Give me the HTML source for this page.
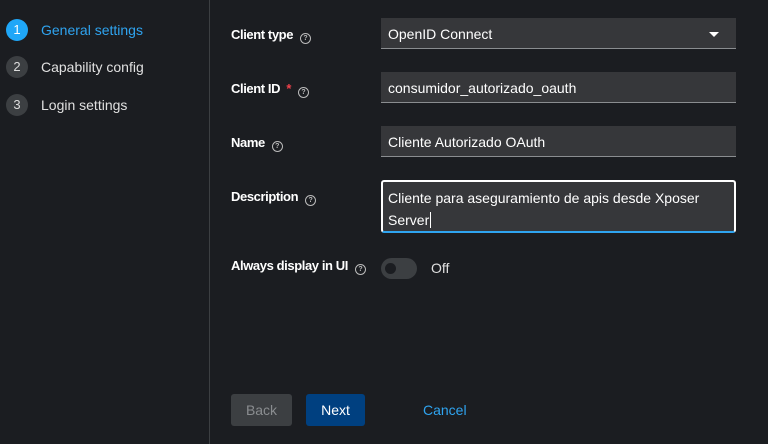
<html><head><style>
body{margin:0;width:768px;height:444px;background:#1b1d21;font-family:"Liberation Sans",sans-serif;position:relative;overflow:hidden;color:#e0e0e0}
.a{position:absolute}
.div{left:209px;top:0;width:1px;height:444px;background:#3c3f42}
.num{width:22px;height:22px;border-radius:50%;background:#3c3f42;color:#ddd;font-size:13px;text-align:center;line-height:21px;left:6px}
.st{left:41px;font-size:14px;color:#e0e0e0}
.lab{left:231px;font-size:13px;font-weight:bold;color:#fff;letter-spacing:-0.4px;white-space:nowrap}
.q{display:inline-block;width:9px;height:9px;border:1.3px solid #bbb;border-radius:50%;font-size:7px;line-height:9px;text-align:center;color:#bbb;margin-left:7px;vertical-align:-1px;font-weight:bold;letter-spacing:0}
.in{left:381px;width:355px;height:31px;background:#36373a;border-bottom:1px solid #8a8d90;box-sizing:border-box;font-size:14px;color:#fff;padding:8px 7px}
.btn{height:32px;border-radius:3px;font-size:14px;text-align:center;line-height:32px}
</style></head><body>
<div class="a div"></div>
<div class="a num" style="top:19px;background:#1fa7f8;color:#fff">1</div>
<div class="a st" style="top:22px;color:#2fa4f0">General settings</div>
<div class="a num" style="top:56px">2</div>
<div class="a st" style="top:59px">Capability config</div>
<div class="a num" style="top:94px">3</div>
<div class="a st" style="top:97px">Login settings</div>

<div class="a lab" style="top:27px">Client type<span class="q">?</span></div>
<div class="a in" style="top:18px">OpenID Connect<span style="position:absolute;right:17px;top:14px;border:5px solid transparent;border-top:5px solid #fff;border-bottom:0"></span></div>
<div class="a lab" style="top:81px">Client ID <span style="color:#f0414a;margin-left:3px">*</span><span class="q">?</span></div>
<div class="a in" style="top:72px">consumidor_autorizado_oauth</div>
<div class="a lab" style="top:135px">Name<span class="q">?</span></div>
<div class="a in" style="top:126px">Cliente Autorizado OAuth</div>
<div class="a lab" style="top:189px">Description<span class="q">?</span></div>
<div class="a in" style="top:180px;height:53px;border:2px solid #fff;border-bottom-color:#2fa4f0;border-radius:3px;padding:5px 5px;line-height:22px">Cliente para aseguramiento de apis desde Xposer Server<span style="border-left:1px solid #fff;margin-left:1px"></span></div>
<div class="a lab" style="top:258px">Always display in UI<span class="q">?</span></div>
<div class="a" style="left:381px;top:258px;width:36px;height:21px;border-radius:11px;background:#3c3f42"><div class="a" style="left:4px;top:5px;width:11px;height:11px;border-radius:50%;background:#1b1d21"></div></div>
<div class="a" style="left:431px;top:260px;font-size:14px">Off</div>

<div class="a btn" style="left:231px;top:394px;width:61px;background:#3c3f42;color:#8a8d90">Back</div>
<div class="a btn" style="left:306px;top:394px;width:59px;background:#004080;color:#fff">Next</div>
<div class="a" style="left:423px;top:402px;font-size:14px;color:#2fa4f0">Cancel</div>
</body></html>
